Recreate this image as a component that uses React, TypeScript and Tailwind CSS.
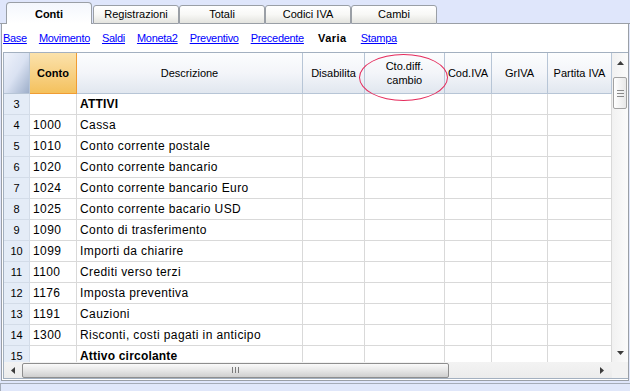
import type { ReactNode } from "react";

type Row = { n: number; code: string; desc: string; bold?: boolean };

const rows: Row[] = [
  { n: 3, code: "", desc: "ATTIVI", bold: true },
  { n: 4, code: "1000", desc: "Cassa" },
  { n: 5, code: "1010", desc: "Conto corrente postale" },
  { n: 6, code: "1020", desc: "Conto corrente bancario" },
  { n: 7, code: "1024", desc: "Conto corrente bancario Euro" },
  { n: 8, code: "1025", desc: "Conto corrente bacario USD" },
  { n: 9, code: "1090", desc: "Conto di trasferimento" },
  { n: 10, code: "1099", desc: "Importi da chiarire" },
  { n: 11, code: "1100", desc: "Crediti verso terzi" },
  { n: 12, code: "1176", desc: "Imposta preventiva" },
  { n: 13, code: "1191", desc: "Cauzioni" },
  { n: 14, code: "1300", desc: "Risconti, costi pagati in anticipo" },
  { n: 15, code: "", desc: "Attivo circolante", bold: true },
];

const tabs = ["Registrazioni", "Totali", "Codici IVA", "Cambi"];
const links = ["Base", "Movimento", "Saldi", "Moneta2", "Preventivo", "Precedente"];

const cols = "grid grid-cols-[26px_47px_226px_62px_80px_47px_56px_64px]";

function HeadCell({ children }: { children?: ReactNode }) {
  return (
    <div className="flex items-center justify-center border-r border-b border-[#b7c5d6] bg-gradient-to-b from-[#fcfdfe] via-[#f3f5f9] to-[#e1e7ef] text-center text-[11px] leading-[14px] text-black">
      {children}
    </div>
  );
}

function Arrow({ dir }: { dir: "up" | "down" | "left" | "right" }) {
  const pts = {
    up: "0,4 7,4 3.5,0",
    down: "0,0 7,0 3.5,4",
    left: "4,0 4,7 0,3.5",
    right: "0,0 0,7 4,3.5",
  }[dir];
  const vertical = dir === "up" || dir === "down";
  return (
    <svg width={vertical ? 7 : 4} height={vertical ? 4 : 7} className="block">
      <polygon points={pts} fill="#3c3c3c" />
    </svg>
  );
}

export default function App() {
  return (
    <div className="relative flex h-[391px] w-[630px] flex-col overflow-hidden bg-[#dfe6fb] font-['Liberation_Sans',Arial,sans-serif] text-black">
      {/* tab strip */}
      <div className="flex h-[24px] items-end">
        <div className="h-full w-[6px] border-b border-[#9a9fa6]" />
        <div className="flex h-[22px] w-[86px] items-center justify-center rounded-t-[4px] border-x border-t border-[#9a9fa6] bg-gradient-to-b from-[#f4f7fd] to-white pt-[1px] text-[11px] font-bold">
          Conti
        </div>
        <div className="h-full w-[1px] border-b border-[#9a9fa6]" />
        {tabs.map((t) => (
          <div
            key={t}
            className="flex h-[19px] w-[86px] items-center justify-center rounded-t-[3px] border border-[#9a9fa6] bg-gradient-to-b from-white via-[#f8f8f6] to-[#e4e4df] text-[11px]"
          >
            {t}
          </div>
        ))}
        <div className="h-full flex-1 border-b border-[#9a9fa6]" />
      </div>

      {/* main panel */}
      <div className="ml-[1px] flex h-[357px] w-[628px] flex-col border-x border-b border-[#9a9fa6] bg-white">
        <div className="flex h-[28px] items-center gap-[12px] pl-[1px] pt-[1px] text-[11px] tracking-[-0.3px]">
          {links.map((l) => (
            <span key={l} className="text-[#0000ff] underline">
              {l}
            </span>
          ))}
          <span className="ml-[2px] font-bold tracking-[0.5px]">Varia</span>
          <span className="ml-[2px] text-[#0000ff] underline">Stampa</span>
        </div>

        <div className="ml-[1px] flex w-[625px] flex-col border-y border-l border-[#a3b0c0]">
          <div className="flex h-[309px]">
            <div className="flex w-[608px] flex-col">
              <div className={`${cols} h-[41px]`}>
                <div className="border-r border-b border-[#b7c5d6] bg-gradient-to-br from-[#eef2fb] via-[#dae2f2] to-[#9eafca]" />
                <div className="flex items-center justify-center border-r border-b border-[#f09c33] bg-gradient-to-b from-[#fbe2ab] to-[#f4c15c] text-[11px] font-bold">
                  Conto
                </div>
                <HeadCell>Descrizione</HeadCell>
                <HeadCell>Disabilita</HeadCell>
                <HeadCell>
                  Cto.diff.
                  <br />
                  cambio
                </HeadCell>
                <HeadCell>Cod.IVA</HeadCell>
                <HeadCell>GrIVA</HeadCell>
                <HeadCell>Partita IVA</HeadCell>
              </div>
              <div className="h-[268px] overflow-hidden">
                {rows.map((r) => (
                  <div key={r.n} className={`${cols} h-[21px] text-[12px] tracking-[0.4px]`}>
                    <div className="flex items-center justify-center border-r border-b border-[#d3dce8] bg-[#e4ecf7] text-[11px] tracking-normal">
                      {r.n}
                    </div>
                    <div className="flex items-center border-r border-b border-[#d9d9d9] pl-[3px]">{r.code}</div>
                    <div
                      className={`flex items-center border-r border-b border-[#d9d9d9] pl-[3px] ${
                        r.bold ? "font-bold tracking-[0.2px]" : ""
                      }`}
                    >
                      {r.desc}
                    </div>
                    <div className="border-r border-b border-[#d9d9d9]" />
                    <div className="border-r border-b border-[#d9d9d9]" />
                    <div className="border-r border-b border-[#d9d9d9]" />
                    <div className="border-r border-b border-[#d9d9d9]" />
                    <div className="border-r border-b border-[#d9d9d9]" />
                  </div>
                ))}
              </div>
            </div>

            {/* vertical scrollbar */}
            <div className="flex w-[16px] flex-col items-center bg-gradient-to-r from-[#f1f1f1] to-[#fbfbfb]">
              <div className="flex h-[16px] items-center justify-center pt-[4px]">
                <Arrow dir="up" />
              </div>
              <div className="mt-[8px] flex h-[32px] w-[14px] flex-col items-center justify-center gap-[2px] rounded-[2px] border border-[#a2a2a2] bg-gradient-to-r from-white to-[#e8e8e8]">
                <div className="h-px w-[7px] bg-[#8a8a8a]" />
                <div className="h-px w-[7px] bg-[#8a8a8a]" />
                <div className="h-px w-[7px] bg-[#8a8a8a]" />
              </div>
              <div className="flex-1" />
              <div className="flex h-[16px] items-center justify-center pb-[2px]">
                <Arrow dir="down" />
              </div>
            </div>
          </div>

          {/* horizontal scrollbar */}
          <div className="flex h-[16px]">
            <div className="flex w-[608px] items-center bg-gradient-to-b from-[#f3f3f3] to-[#ececec]">
              <div className="flex w-[18px] justify-center">
                <Arrow dir="left" />
              </div>
              <div className="flex h-[15px] w-[427px] items-center justify-center gap-[2px] rounded-[2px] border border-[#8e8e8e] bg-gradient-to-b from-[#fafafa] via-[#e6e6e6] to-[#cfcfcf]">
                <div className="h-[6px] w-px bg-[#7a7a7a]" />
                <div className="h-[6px] w-px bg-[#7a7a7a]" />
                <div className="h-[6px] w-px bg-[#7a7a7a]" />
              </div>
              <div className="flex-1" />
              <div className="flex w-[20px] justify-center">
                <Arrow dir="right" />
              </div>
            </div>
            <div className="w-[16px] bg-[#f2f2f2]" />
          </div>
        </div>
      </div>

      {/* status panel */}
      <div className="mt-[2px] flex-1 border-t border-l border-[#a5acb8] bg-[#e0e7fa]" />

      {/* annotation ellipse */}
      <div className="absolute left-[359px] top-[54px] h-[47px] w-[89px] rounded-[50%] border-[1.5px] border-[#e52b5c]" />
    </div>
  );
}
